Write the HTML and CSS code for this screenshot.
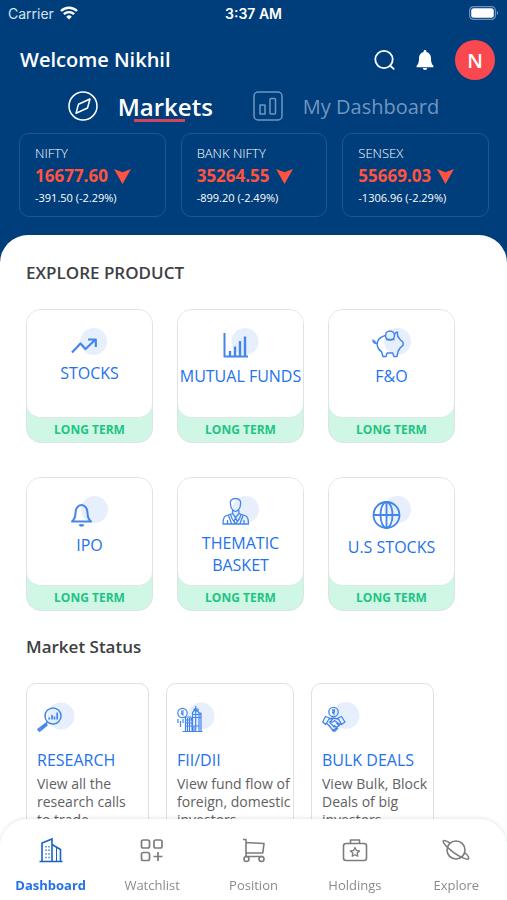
FILE: index.html
```html
<!DOCTYPE html>
<html lang="en">
<head>
<meta charset="utf-8">
<meta name="viewport" content="width=device-width, initial-scale=1">
<title>Markets</title>
<link rel="stylesheet" href="styles.css">
</head>
<body>
<header class="header">
  <div class="status">
    <span class="status-side">Carrier
      <svg width="18" height="14" viewBox="0 0 18 14" fill="none" stroke="#fff" stroke-width="2.4"><path d="M1 5a11.500 11.500 0 0 1 16 0M3.900 8.200a7.300 7.300 0 0 1 10.200 0"/><path d="M9 13.500 6.200 10.700a4 4 0 0 1 5.600 0z" fill="#fff" stroke="none"/></svg>
    </span>
    <span class="status-time">3:37 AM</span>
    <span class="status-side status-end">
      <svg width="30" height="14" viewBox="0 0 30 14"><rect x=".6" y=".6" width="25.800" height="12.800" rx="4" fill="none" stroke="#6f93b8" stroke-width="1.200"/><rect x="2.200" y="2.200" width="22.600" height="9.600" rx="2.500" fill="#fff"/><path d="M27.800 4.800q3 2.200 0 4.400z" fill="#6f93b8"/></svg>
    </span>
  </div>

  <div class="welcome">
    <h1 class="welcome-name">Welcome Nikhil</h1>
    <button class="icon-button" aria-label="Search">
      <svg width="22" height="22" viewBox="0 0 22 22" fill="none" stroke="#fff" stroke-width="1.800" stroke-linecap="round"><circle cx="11" cy="10.500" r="8.700"/><path d="m17 16.500 3.700 3.400"/></svg>
    </button>
    <button class="icon-button" aria-label="Notifications">
      <svg width="18" height="22" viewBox="0 0 18 22" fill="#fff"><path d="M9 1c.8 0 1.400.6 1.400 1.400v.5c2.900.7 4.600 3 4.600 6.200 0 4 .6 6.200 2.400 7.700v1.400H.6v-1.400C2.400 15.300 3 13.100 3 9.100c0-3.200 1.700-5.500 4.600-6.200v-.5C7.600 1.600 8.200 1 9 1z"/><path d="M6.800 19.100h4.400a2.200 2 0 0 1-4.400 0z"/></svg>
    </button>
    <button class="avatar" aria-label="Profile">N</button>
  </div>

  <nav class="tabs" aria-label="Views">
    <a class="tab tab-active" href="#markets">
      <svg width="30" height="30" viewBox="0 0 30 30" fill="none" stroke="#fff" stroke-width="1.500" stroke-linejoin="round"><circle cx="15" cy="15" r="14"/><path d="m22 8-2.500 9L8 22.300l2.500-9z"/></svg>
      <span class="tab-text">Markets</span>
    </a>
    <a class="tab" href="#dashboard">
      <svg width="30" height="30" viewBox="0 0 30 30" fill="none" stroke="currentColor" stroke-width="1.500" stroke-linejoin="round"><rect x="1" y="1" width="28" height="28" rx="4"/><rect x="7" y="14" width="5" height="9"/><rect x="17" y="7.500" width="5.500" height="15.500" rx="1"/></svg>
      <span>My Dashboard</span>
    </a>
  </nav>

  <div class="tickers">
    <article class="ticker">
      <h2 class="ticker-name">NIFTY</h2>
      <p class="ticker-value">16677.60 <svg width="17" height="16" viewBox="0 0 17 16"><path d="m0 1 8.500 3.300L17 1 8.500 16z" fill="#ff533f"/></svg></p>
      <p class="ticker-change">-391.50 (-2.29%)</p>
    </article>
    <article class="ticker">
      <h2 class="ticker-name">BANK NIFTY</h2>
      <p class="ticker-value">35264.55 <svg width="17" height="16" viewBox="0 0 17 16"><path d="m0 1 8.500 3.300L17 1 8.500 16z" fill="#ff533f"/></svg></p>
      <p class="ticker-change">-899.20 (-2.49%)</p>
    </article>
    <article class="ticker">
      <h2 class="ticker-name">SENSEX</h2>
      <p class="ticker-value">55669.03 <svg width="17" height="16" viewBox="0 0 17 16"><path d="m0 1 8.500 3.300L17 1 8.500 16z" fill="#ff533f"/></svg></p>
      <p class="ticker-change">-1306.96 (-2.29%)</p>
    </article>
  </div>
</header>

<main class="sheet">
  <h2 class="section-title">EXPLORE PRODUCT</h2>
  <div class="products">
    <a class="product" href="#stocks">
      <span class="product-body">
        <svg class="icon" width="38" height="27" viewBox="0 0 38 27"><circle class="halo" cx="22.500" cy="13.500" r="13.500"/><path d="m1 24.500 8.500-9 5 5.500 10-9.500M17 11.500H24.800V19" stroke-width="2.200"/></svg>
        STOCKS
      </span>
      <span class="product-term">LONG TERM</span>
    </a>
    <a class="product" href="#funds">
      <span class="product-body">
        <svg class="icon" width="36" height="30" viewBox="0 0 36 30"><circle class="halo" cx="22" cy="13.500" r="13.500"/><path d="M1.500 5v23.500H25" stroke-width="2"/><path d="M7 23v5M12 18.500V28M17 13v15M22 8.500V28" stroke-width="2.400"/></svg>
        MUTUAL FUNDS
      </span>
      <span class="product-term">LONG TERM</span>
    </a>
    <a class="product" href="#fno">
      <span class="product-body">
        <svg class="icon" width="40" height="30" viewBox="0 0 40 30"><circle class="halo" cx="25.500" cy="13.500" r="13.500"/><circle cx="18" cy="7.500" r="4.500"/><path d="M14 11.500h8.500M13.500 7.500C10 8.300 7 10.500 5.500 13.500c-1.200 4.500 1 8.500 4 10.200l1.500 4.800h3l1.200-3.500h5.500l1.200 3.500h3l1.200-5.200 2-3.300 3-2.700v-3L28 11.500c-.6-1.200-1.200-2-2.200-2.800L25.300 4c-1.300.2-2.300 1-2.800 2.500M5.500 15.500c-2 0-3.200-1.300-2.700-3M3.500 15.200c-1.700-.2-2.800-1.700-2.300-3.700"/></svg>
        F&amp;O
      </span>
      <span class="product-term">LONG TERM</span>
    </a>
    <a class="product" href="#ipo">
      <span class="product-body">
        <svg class="icon" width="38" height="31" viewBox="0 0 38 31"><circle class="halo" cx="23.500" cy="13.500" r="13.500"/><path d="M1 25.500c3-2.500 3.500-5 3.500-8.500 0-4.500 2.500-8 6-8s6 3.500 6 8c0 3.500.5 6 3.500 8.500z" stroke-width="2"/><path d="M8.500 28.500c1 1.300 3 1.300 4 0" stroke-width="2.400"/></svg>
        IPO
      </span>
      <span class="product-term">LONG TERM</span>
    </a>
    <a class="product" href="#basket">
      <span class="product-body">
        <svg class="icon" width="46" height="29" viewBox="0 0 46 29"><circle class="halo" cx="27.500" cy="13.500" r="13.500"/><path d="M12.500 8c-.8-3.500 1.500-5.500 5-5.500s5.800 2 5 5.500c0 3.500-1.500 6.500-5 7.500-3.500-1-5-4-5-7.500zM14.500 14.500v3L7.500 20C6 21 5 23 5 28h25.500c0-5-1-7-2.500-8l-7-2.500v-3M14.500 17.500l3 4 3.500-4M12.500 18.500l1.500 4 3.500 5.500 4-5.500 1.500-4M17.500 21.500 16 26M17.500 21.500l2 4.500M9.500 24v4M26 24v4M10.500 19.500l3 8M25 19.500l-3 8" stroke-width="1.300"/></svg>
        THEMATIC BASKET
      </span>
      <span class="product-term">LONG TERM</span>
    </a>
    <a class="product" href="#us-stocks">
      <span class="product-body">
        <svg class="icon" width="40" height="33" viewBox="0 0 40 33"><circle class="halo" cx="25.500" cy="13.500" r="13.500"/><g stroke-width="1.800"><circle cx="14.500" cy="19" r="13"/><ellipse cx="14.500" cy="19" rx="6" ry="13"/><path d="M1.500 19h26M14.500 6v26"/></g></svg>
        U.S STOCKS
      </span>
      <span class="product-term">LONG TERM</span>
    </a>
  </div>

  <h2 class="section-title">Market Status</h2>
  <div class="reports">
    <article class="report">
      <svg class="icon" width="40" height="34" viewBox="0 0 40 34"><circle class="halo" cx="24" cy="16" r="13.500"/><circle cx="16" cy="16" r="8"/><path d="m10.500 22-2 2M9 23.500 1 29.500l1.500 1.500L9.800 25z" stroke-width="1.700"/><path d="M12.200 17.500v2M15 15v4.500M17.500 16.500v3M20.200 12.500v7" stroke-width="1.700"/></svg>
      <h3 class="report-title">RESEARCH</h3>
      <p class="report-text">View all the research calls<br>to trade.</p>
    </article>
    <article class="report report-wide">
      <svg class="icon" width="40" height="34" viewBox="0 0 40 34"><circle class="halo" cx="24" cy="16" r="13.500"/><g stroke-width="1.200"><circle cx="5.500" cy="13" r="4.700"/><path d="M4 11h3M4 13h3M5 11v4M6.500 15.500 4 13M1 19v4M3.500 21v6M6 19v4M8.500 17h5l1.500 3v11.500H8.500zM10.500 18v13M12.500 18v13M15.500 31V12.500l3-3 3.500 3V31M18.700 6v25M17 11V9h4v2M8 20h7M8 23h7M8 26h7M15.500 14.500H24M15.500 17.500H24M24 31V13h-2.500M17 31v-5h5v5M5.500 31.500h20"/></g></svg>
      <h3 class="report-title">FII/DII</h3>
      <p class="report-text">View fund flow of foreign, domestic investors.</p>
    </article>
    <article class="report">
      <svg class="icon" width="40" height="34" viewBox="0 0 40 34"><circle class="halo" cx="24" cy="15.500" r="13.500"/><g stroke-width="1.300"><circle cx="11.500" cy="12" r="4.700"/><path d="M10 10h3M10 12h3M12 10c1 1.500 0 2.500-1.500 2.500l2 2M3.500 16.500 0.700 22l3 2.500L7.500 18zM19.500 16.500l3.500 5.500-3.500 2.500L16 18zM7 19l4-1 5 1M5 23.500l5 5.500c1 1 2 1 3 0l6-5.500M7 21.500l5.500 6M11 18.500l-2.500 3c1.500 1.200 3 .5 4-1l5.500 4M12 25l3 3M14.500 23l3 3M7 25l4 6h2l3-3"/></g></svg>
      <h3 class="report-title">BULK DEALS</h3>
      <p class="report-text">View Bulk, Block Deals of big investors.</p>
    </article>
  </div>
</main>

<nav class="bottom-nav" aria-label="Main">
  <a class="nav-item nav-active" href="#home">
    <svg width="26" height="26" viewBox="0 0 26 26" fill="none" stroke="#1b62c0" stroke-width="1.600"><path d="M1.500 24.500h23M4 24.500V6l10-4v22.500M14 7.500l8.500 5v12"/><path d="M18.500 10.500v14" stroke-width="1"/><path d="M8 9v12.500M11 9v12.500" stroke-width="1.200" stroke-dasharray="1.500 2.100"/></svg>
    Dashboard
  </a>
  <a class="nav-item" href="#watchlist">
    <svg width="26" height="26" viewBox="0 0 26 26" fill="none" stroke="#7c7c7c" stroke-width="1.700"><rect x="2.500" y="3" width="8" height="8" rx="1.800"/><rect x="15" y="3" width="8" height="8" rx="1.800"/><rect x="2.500" y="15.500" width="8" height="8" rx="1.800"/><path d="M19 15v9M14.500 19.500h9"/></svg>
    Watchlist
  </a>
  <a class="nav-item" href="#position">
    <svg width="26" height="26" viewBox="0 0 26 26" fill="none" stroke="#7c7c7c" stroke-width="1.600" stroke-linejoin="round"><path d="M2 2.500h3v17M5 5.500l18 1-1.200 9.500H5M5 19.500h17"/><circle cx="5.500" cy="22" r="2.500"/><circle cx="20.500" cy="22" r="2.500"/></svg>
    Position
  </a>
  <a class="nav-item" href="#holdings">
    <svg width="26" height="26" viewBox="0 0 26 26" fill="none" stroke="#7c7c7c" stroke-width="1.600" stroke-linejoin="round"><rect x="1.500" y="6.500" width="23" height="17" rx="2.500"/><path d="M8.500 6.500V3h9v3.500"/><path d="m13 10.500 1.400 3 3.200.4-2.400 2.200.6 3.200-2.800-1.600-2.800 1.600.6-3.200-2.400-2.200 3.200-.4z" stroke-width="1.300"/></svg>
    Holdings
  </a>
  <a class="nav-item" href="#explore">
    <svg width="28" height="26" viewBox="0 0 28 26" fill="none" stroke="#7c7c7c" stroke-width="1.600"><circle cx="14" cy="13" r="9"/><path d="M8 6C4.500 3.800 2 3 1.300 4.100.5 6 6.500 11.500 11.500 15.300S25.500 23.500 26.500 21.800c.7-1.300-1-3.800-4-6.300"/></svg>
    Explore
  </a>
</nav>
</body>
</html>
```
FILE: styles.css
```css
* {
  box-sizing: border-box;
}

body {
  margin: 0;
  height: 100vh;
  display: flex;
  flex-direction: column;
  overflow: hidden;
  background: #003e7b;
  font-family: "Open Sans", sans-serif;
  color: #fff;
}

h1, h2, h3, p {
  margin: 0;
}

a {
  color: inherit;
  text-decoration: none;
}

button {
  border: 0;
  padding: 0;
  background: none;
  color: inherit;
  font: inherit;
}

svg {
  display: block;
  flex: none;
}

/* Header */

.header {
  flex: none;
  padding-bottom: 18px;
}

.status {
  display: flex;
  align-items: center;
  height: 26px;
  padding: 0 8px;
  font-family: Inter, sans-serif;
  font-size: 14px;
}

.status-side {
  flex: 1;
  display: flex;
  align-items: center;
  gap: 6px;
  color: #d5e2f0;
}

.status-end {
  justify-content: flex-end;
}

.status-time {
  font-weight: 600;
}

.welcome {
  display: flex;
  align-items: center;
  padding: 14px 12px 0 20px;
}

.welcome-name {
  flex: 1;
  font-size: 20px;
  font-weight: 600;
  line-height: 28px;
}

.icon-button {
  margin-right: 21px;
}

.avatar {
  width: 40px;
  height: 40px;
  border-radius: 50%;
  background: #f9484f;
  font-size: 20px;
  font-weight: 600;
}

.tabs {
  display: flex;
  justify-content: center;
  gap: 40px;
  padding-top: 8px;
}

.tab {
  display: flex;
  align-items: center;
  gap: 20px;
  height: 36px;
  color: #7096bf;
  font-size: 20px;
}

.tab-active {
  color: #fff;
  font-size: 24px;
  font-weight: 600;
}

.tab-text {
  position: relative;
}

.tab-text::after {
  content: "";
  position: absolute;
  left: 17%;
  right: 29%;
  bottom: 1px;
  height: 3px;
  background: #d0455c;
}

.tickers {
  display: grid;
  grid-template-columns: repeat(3, 1fr);
  gap: 15px;
  padding: 9px 18px 0 19px;
}

.ticker {
  height: 84px;
  padding: 9px 15px;
  border: 1px solid #1c5695;
  border-radius: 10px;
}

.ticker-name {
  font-size: 13px;
  font-weight: 300;
  line-height: 20px;
}

.ticker-value {
  display: flex;
  align-items: center;
  gap: 6px;
  color: #ff533f;
  font-size: 17px;
  font-weight: 700;
  line-height: 26px;
}

.ticker-change {
  font-size: 11px;
  line-height: 18px;
}

/* Content sheet */

.sheet {
  flex: 1;
  min-height: 0;
  overflow: hidden;
  padding: 26px 26px 0;
  border-radius: 28px 28px 0 0;
  background: #fff;
}

.section-title {
  color: #3e4044;
  font-size: 17px;
  font-weight: 600;
  line-height: 24px;
}

.products {
  display: grid;
  grid-template-columns: repeat(3, 1fr);
  gap: 34px 24px;
  padding: 24px 26px 24px 0;
}

.product {
  display: flex;
  flex-direction: column;
  height: 134px;
  overflow: hidden;
  border: 1px solid #dfe3e4;
  border-radius: 15px;
  background: #d0f6e6;
  text-align: center;
}

.product-body {
  flex: 1;
  display: flex;
  flex-direction: column;
  align-items: center;
  gap: 7px;
  padding-top: 18px;
  border-bottom: 1px solid #dfe9e6;
  border-radius: 0 0 14px 14px;
  background: #fff;
  color: #2472ea;
  font-size: 16px;
  line-height: 22px;
}

.product-term {
  color: #1dc583;
  font-size: 12px;
  font-weight: 700;
  line-height: 24px;
}

.icon {
  fill: none;
  stroke: #4285eb;
  stroke-width: 1.5;
  stroke-linejoin: round;
}

.halo {
  fill: #e7effd;
  stroke: none;
}

.reports {
  display: flex;
  gap: 17px;
  padding-top: 24px;
}

.report {
  flex: 0 0 123px;
  height: 160px;
  padding: 16px 0 0 10px;
  border: 1px solid #dfe1e3;
  border-radius: 10px;
}

.report-wide {
  flex-basis: 128px;
}

.report-title {
  padding-top: 14px;
  color: #2472ea;
  font-size: 16px;
  font-weight: 400;
  line-height: 24px;
}

.report-text {
  padding-top: 3px;
  color: #606164;
  font-size: 14px;
  line-height: 18px;
}

/* Bottom navigation */

.bottom-nav {
  position: fixed;
  left: 0;
  right: 0;
  bottom: 0;
  display: flex;
  padding: 18px 0 5px;
  border-radius: 28px 28px 0 0;
  background: #fff;
  box-shadow: 0 -1px 4px rgba(0, 0, 0, 0.1);
}

.nav-item {
  flex: 1;
  display: flex;
  flex-direction: column;
  align-items: center;
  gap: 12px;
  color: #8b8b8b;
  font-size: 13px;
  line-height: 20px;
}

.nav-active {
  color: #2472ea;
  font-weight: 700;
}
```
